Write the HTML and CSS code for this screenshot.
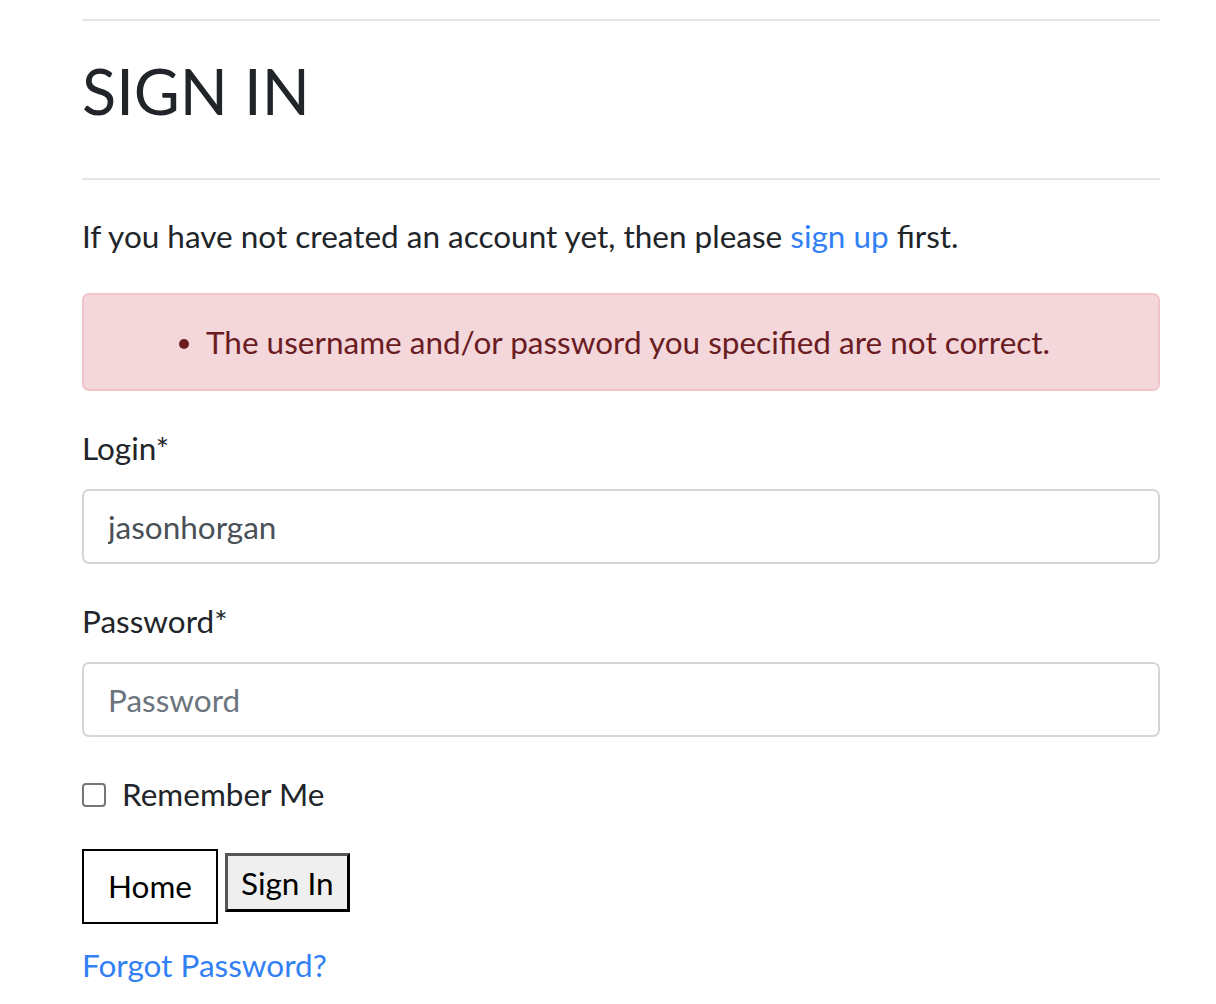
FILE: index.html
```html
<!DOCTYPE html>
<html>
<head>
<meta charset="utf-8">
<link rel="stylesheet" href="styles.css">
</head>
<body>
<main class="container">
  <hr class="rule">
  <h1 class="title">SIGN IN</h1>
  <hr class="rule">
  <p class="intro">If you have not created an account yet, then please <a href="#" class="link">sign up</a> first.</p>
  <div class="alert">
    <ul class="errors">
      <li>The username and/or password you specified are not correct.</li>
    </ul>
  </div>
  <form class="form">
    <div class="field">
      <label class="label">Login*</label>
      <input class="input" type="text" value="jasonhorgan">
    </div>
    <div class="field">
      <label class="label">Password*</label>
      <input class="input" type="password" placeholder="Password">
    </div>
    <div class="check">
      <input type="checkbox" class="checkbox">
      <label class="check-label">Remember Me</label>
    </div>
    <div class="buttons">
      <a href="#" class="btn-home">Home</a>
      <button type="button" class="btn-signin">Sign In</button>
    </div>
    <a href="#" class="link forgot">Forgot Password?</a>
  </form>
</main>
</body>
</html>
```
FILE: styles.css
```css
* { box-sizing: border-box; }
html, body { margin: 0; padding: 0; background: #fff; }
body {
  font-family: Lato, "Open Sans", sans-serif;
  font-size: 31.5px;
  line-height: 47px;
  color: #212529;
}
.container {
  width: 1078px;
  margin-left: 82px;
  padding-top: 19px;
}
.rule {
  border: 0;
  border-top: 2px solid #e6e6e6;
  margin: 0;
}
.title {
  font-size: 63px;
  font-weight: 400;
  line-height: 76px;
  margin: 32px 0 49px;
}
.intro { margin: 33px 0 33px; }
.link { color: #3280f6; text-decoration: none; }
.alert {
  background: #f3d7da;
  border: 2px solid #f0c4c8;
  border-radius: 7px;
  color: #6b1c23;
  padding: 28px 0;
}
.errors { margin: 0; padding-left: 122px; }
.errors li { line-height: 38px; }
.form { margin-top: 34px; }
.field { margin-bottom: 34px; }
.label { display: block; margin-bottom: 17px; }
.input {
  display: block;
  width: 100%;
  height: 75px;
  border: 2px solid #d3d6d9;
  border-radius: 7px;
  font-family: inherit;
  font-size: 31.5px;
  color: #495057;
  padding: 0 24px;
  outline: none;
}
.input::placeholder { color: #6c757d; }
.check { display: flex; align-items: center; gap: 16px; }
.checkbox {
  appearance: none;
  -webkit-appearance: none;
  width: 24px;
  height: 24px;
  margin: 0;
  border: 2px solid #767676;
  border-radius: 4px;
  background: #fff;
}
.buttons { display: flex; align-items: flex-start; gap: 7px; margin-top: 31px; }
.btn-home {
  display: inline-block;
  border: 2px solid #000;
  color: #000;
  text-decoration: none;
  padding: 12px 24px 12px 24px;
  background: #fff;
}
.btn-signin {
  margin-top: 4px;
  font-family: inherit;
  font-size: 31.5px;
  line-height: 38px;
  height: 59px;
  background: #efefef;
  border: 3px solid;
  border-color: #555 #000 #000 #555;
  padding: 0 13px;
  color: #000;
}
.forgot { display: inline-block; margin-top: 18px; }
```
